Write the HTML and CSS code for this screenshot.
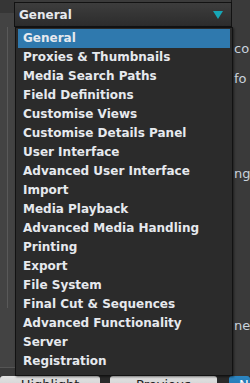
FILE: index.html
```html
<!DOCTYPE html>
<html lang="en">
<head>
    <meta charset="UTF-8">
    <title>Preferences</title>
    <link rel="stylesheet" href="styles.css">
</head>
<body>

    <div class="app">
        <div class="content">
            <div class="gutter">
                <div class="rail"></div>
            </div>
            <div class="middle"></div>
            <div class="side">
                <span class="peek p1">co</span>
                <span class="peek p2">fo</span>
                <span class="peek p3">ng</span>
                <span class="peek p4">ner</span>
            </div>
        </div>
        <div class="buttons">
            <div class="btn light">Highlight</div>
            <div class="btn light second">Previous</div>
            <div class="btn blue">N</div>
        </div>
    </div>

    <div class="combo">
        <span class="combo-label">General</span>
        <span class="arrow"></span>
    </div>

    <ul class="menu">
        <li class="selected">General</li>
        <li>Proxies &amp; Thumbnails</li>
        <li>Media Search Paths</li>
        <li>Field Definitions</li>
        <li>Customise Views</li>
        <li>Customise Details Panel</li>
        <li>User Interface</li>
        <li>Advanced User Interface</li>
        <li>Import</li>
        <li>Media Playback</li>
        <li>Advanced Media Handling</li>
        <li>Printing</li>
        <li>Export</li>
        <li>File System</li>
        <li>Final Cut &amp; Sequences</li>
        <li>Advanced Functionality</li>
        <li>Server</li>
        <li>Registration</li>
    </ul>

</body>
</html>
```

FILE: styles.css
```css
body {
    margin: 0;
    width: 250px;
    height: 383px;
    overflow: hidden;
    background-color: #3b3b3b;
    font-family: "DejaVu Sans", sans-serif;
    font-weight: bold;
    font-size: 12px;
    color: #e6e9ee;
}
.app {
    display: flex;
    flex-direction: column;
    height: 383px;
}
.content {
    display: flex;
    height: 376px;
}
.gutter {
    width: 15px;
    padding-top: 14px;
    background-color: #434343;
    border-top: 13px solid #363636;
    border-bottom: 8px solid #3a3a3a;
    box-shadow: inset 0 -1px 0 #555;
    box-sizing: border-box;
}
.rail {
    margin-left: 7px;
    width: 1px;
    height: 281px;
    background-color: #595959;
}
.middle {
    flex: 1;
}
.side {
    width: 18px;
    background-color: #3a3a3a;
    border-left: 1px solid #1a1a1a;
    position: relative;
    font-weight: normal;
    font-size: 13px;
    color: #c9d3de;
}
.peek {
    position: absolute;
    left: 2px;
}
.p1 { top: 41px; }
.p2 { top: 71px; }
.p3 { top: 166px; }
.p4 { top: 318px; }
.buttons {
    display: flex;
    height: 7px;
    overflow: hidden;
    background-color: #2a2a2a;
    font-weight: normal;
    font-size: 13px;
}
.btn {
    height: 20px;
    padding-top: 1px;
    text-align: center;
    color: #222;
    border-radius: 3px 3px 0 0;
}
.light {
    width: 100px;
    background: linear-gradient(#e2e2e2, #c6c6c6);
}
.second {
    width: 107px;
    margin-left: 10px;
}
.blue {
    flex: 1;
    margin-left: 12px;
    background: linear-gradient(#2c86c2, #1d6ca8);
    color: #fff;
    text-align: left;
    padding-left: 10px;
}
.combo {
    position: absolute;
    left: 14px;
    top: 2px;
    width: 218px;
    height: 25px;
    box-sizing: border-box;
    border: 1px solid #121212;
    background: linear-gradient(#3d3d3d, #2c2c2c);
    display: flex;
    align-items: center;
    justify-content: space-between;
    padding: 0 8px 0 4px;
}
.arrow {
    width: 0;
    height: 0;
    border-left: 5px solid transparent;
    border-right: 5px solid transparent;
    border-top: 8px solid #17a6b6;
}
.menu {
    position: absolute;
    left: 15px;
    top: 27px;
    width: 218px;
    height: 349px;
    box-sizing: border-box;
    margin: 0;
    padding: 1px 2px;
    list-style: none;
    background-color: #2b2b2b;
    border: 1px solid #121212;
    box-shadow: 1px 1px 2px rgba(0, 0, 0, 0.5);
}
.menu li {
    height: 19px;
    line-height: 19px;
    padding-left: 5px;
    white-space: nowrap;
}
.menu li.selected {
    background-color: #2f79ae;
}
```
